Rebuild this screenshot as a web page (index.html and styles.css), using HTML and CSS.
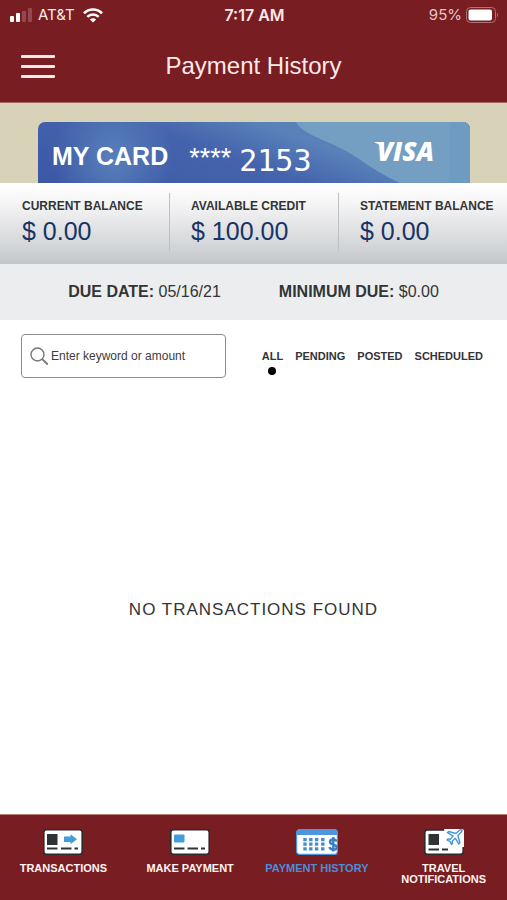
FILE: index.html
```html
<!DOCTYPE html>
<html lang="en">
<head>
<meta charset="utf-8">
<meta name="viewport" content="width=device-width, initial-scale=1">
<title>Payment History</title>
<link rel="stylesheet" href="styles.css">
</head>
<body>
<header class="top">
  <div class="status">
    <div class="status-side">
      <svg class="signal" width="24" height="14" viewBox="0 0 24 14" aria-hidden="true">
        <rect x="0" y="8" width="4" height="6" rx="1" fill="#fff"/>
        <rect x="6" y="5" width="4" height="9" rx="1" fill="#fff"/>
        <rect x="12" y="3" width="4" height="11" rx="1" fill="#934850"/>
        <rect x="18" y="0" width="4" height="14" rx="1" fill="#934850"/>
      </svg>
      <span class="carrier">AT&amp;T</span>
      <svg class="wifi" width="20" height="15" viewBox="0 0 20 15" aria-hidden="true">
        <g fill="none" stroke="#fff" stroke-width="2.6">
          <path d="M1 5.3C6 .2 14 .2 19 5.3"/>
          <path d="M4.3 8.9c3.2-3.2 8.2-3.2 11.4 0"/>
        </g>
        <path d="M10 14.6l-3.1-3.2c1.800-1.700 4.400-1.700 6.200 0z" fill="#fff"/>
      </svg>
    </div>
    <span class="time">7:17 AM</span>
    <div class="status-side status-end">
      <span>95%</span>
      <svg width="33" height="16" viewBox="0 0 33 16" aria-hidden="true">
        <rect x=".5" y=".5" width="29" height="15" rx="4" fill="none" stroke="#ad7479"/>
        <rect x="2.5" y="2.5" width="23.5" height="11" rx="2" fill="#fff"/>
        <path d="M31 5.5q2 2.500 0 5z" fill="#ad7479"/>
      </svg>
    </div>
  </div>
  <div class="title-bar">
    <button class="menu" type="button" aria-label="Menu"><span></span><span></span><span></span></button>
    <h1>Payment History</h1>
  </div>
</header>
<main>
  <section class="card-area">
    <div class="card">
      <svg class="card-art" viewBox="0 0 432 61" preserveAspectRatio="none" aria-hidden="true">
        <path d="M258 0h174v61h-70C334 48 322 36 306 28 288 18 264 12 258 0z" fill="#749fc2"/>
        <path d="M412 0h20v61h-20z" fill="#6e9bc2"/>
      </svg>
      <span class="card-name">MY CARD</span>
      <span class="card-mask">****</span>
      <span class="card-digits">2153</span>
      <span class="visa">VISA</span>
    </div>
  </section>
  <dl class="balances">
    <div><dt>CURRENT BALANCE</dt><dd>$ 0.00</dd></div>
    <div><dt>AVAILABLE CREDIT</dt><dd>$ 100.00</dd></div>
    <div><dt>STATEMENT BALANCE</dt><dd>$ 0.00</dd></div>
  </dl>
  <div class="due">
    <span><strong>DUE DATE:</strong> 05/16/21</span>
    <span><strong>MINIMUM DUE:</strong> $0.00</span>
  </div>
  <div class="filters">
    <label class="search">
      <svg width="19" height="19" viewBox="0 0 19 19" fill="none" stroke="#777" stroke-width="1.400" aria-hidden="true">
        <circle cx="7.500" cy="7.500" r="6.500"/><path d="M12.200 12.200l5.500 5.300" stroke-width="1.800"/>
      </svg>
      <input type="text" placeholder="Enter keyword or amount" aria-label="Enter keyword or amount">
    </label>
    <div class="tabs">
      <button type="button" class="active">ALL</button>
      <button type="button">PENDING</button>
      <button type="button">POSTED</button>
      <button type="button">SCHEDULED</button>
    </div>
  </div>
  <p class="empty">NO TRANSACTIONS FOUND</p>
</main>
<nav class="bottom">
  <a href="#transactions">
    <svg width="40" height="26" viewBox="0 0 40 26" aria-hidden="true">
      <rect x=".8" y=".8" width="38.400" height="24.400" rx="2.500" fill="#fff" stroke="#30292b" stroke-width="1.600"/>
      <path d="M4 5h10.500v11H4z" fill="#303335"/>
      <path d="M21 7.500h6.500V5.300l6.500 5-6.500 5v-2.300H21z" fill="#459cda"/>
      <path d="M4 19.500h10.500M18 19.500h10.500M31.500 19.500H35" stroke="#303335" stroke-width="2.200"/>
    </svg>
    <span>TRANSACTIONS</span>
  </a>
  <a href="#pay">
    <svg width="40" height="26" viewBox="0 0 40 26" aria-hidden="true">
      <rect x=".8" y=".8" width="38.400" height="24.400" rx="2.500" fill="#fff" stroke="#30292b" stroke-width="1.600"/>
      <rect x="4" y="5.500" width="10.500" height="8" rx="1" fill="#459cda"/>
      <path d="M4 19.500h10.500M17.500 19.500H28M31 19.500h4" stroke="#303335" stroke-width="2.200"/>
    </svg>
    <span>MAKE PAYMENT</span>
  </a>
  <a href="#history" class="current">
    <svg width="42" height="26" viewBox="0 0 42 26" aria-hidden="true">
      <rect x=".6" y=".6" width="40.800" height="24.800" rx="3" fill="#fff" stroke="#4b96df" stroke-width="1.200"/>
      <path d="M.6 6V3Q.6.600 3 .6h36q2.400 0 2.400 2.400v3z" fill="#4b96df"/>
      <g stroke="#438bd2" stroke-width="3.400" stroke-dasharray="3.200 1.400">
        <path d="M9 9v12.400M14.800 9v12.400M20.600 9v12.400M26.800 9v12.400"/>
      </g>
      <path d="M40.500 12.500c-.8-2.800-6.500-2.800-6.500.6 0 3.500 6.700 1.700 6.700 5.200 0 3.400-6.400 3.200-7.200-.2M37.300 8v14.500" fill="none" stroke="#347fc8" stroke-width="2.400"/>
    </svg>
    <span>PAYMENT HISTORY</span>
  </a>
  <a href="#travel">
    <svg width="40" height="26" viewBox="0 0 40 26" aria-hidden="true">
      <rect x=".8" y="1" width="38.400" height="24.200" rx="2.500" fill="#fff" stroke="#30292b" stroke-width="1.600"/>
      <path d="M20 0h18q2 0 2 2v16H25z" fill="#fff"/>
      <path d="M4.500 5H15v11H4.500z" fill="#303335"/>
      <path d="M4.500 20.500H15M18 20.500h6" stroke="#303335" stroke-width="2.200"/>
      <path d="M38 1.200c-1.300-.8-2.600-.2-3.700 1l-2.400 2.300-7.200-2-1.200 1.200 5.600 3.400-2.900 3.200-2.300-.4-1 1 3 1.500 1.600 3 1-1-.4-2.200 3.200-3 3.400 5.700 1.200-1.200-2-7.200 2.500-2.400c1.300-1.300 1.900-2.100 1.600-2.900z" fill="#fff" stroke="#4598dc" stroke-width="1.400" stroke-linejoin="round"/>
    </svg>
    <span>TRAVEL NOTIFICATIONS</span>
  </a>
</nav>
</body>
</html>
```

FILE: styles.css
```css
* { box-sizing: border-box; }
body {
  margin: 0;
  min-height: 100vh;
  display: flex;
  flex-direction: column;
  background: #fff;
  color: #333436;
  font-family: "Liberation Sans", Arial, sans-serif;
}
button { font: inherit; color: inherit; background: none; border: 0; padding: 0; }
svg { display: block; flex: none; }

.top { background: #781d22; color: #fbe9e8; border-bottom: 1px solid #a8655f; }
.status {
  display: grid;
  grid-template-columns: 1fr auto 1fr;
  align-items: center;
  height: 30px;
  padding: 0 8px 0 10px;
  font: 15px/20px Inter, sans-serif;
}
.status-side { display: flex; align-items: center; gap: 4px; }
.status-end { justify-content: flex-end; color: #e6c5c6; }
.wifi { margin-left: 4px; }
.time { font-size: 16px; font-weight: 600; }
.title-bar {
  display: grid;
  grid-template-columns: 34px 1fr 34px;
  align-items: center;
  height: 72px;
  padding: 0 21px;
}
.menu { display: grid; gap: 7px; }
.menu span { height: 3px; border-radius: 1px; background: #fbe9e8; }
h1 { margin: 0; font-size: 24px; line-height: 30px; font-weight: 400; text-align: center; }

.card-area { background: #d8d2b9; padding: 19px 37px 0 38px; }
.card {
  position: relative;
  display: flex;
  align-items: center;
  height: 61px;
  padding: 0 36px 0 14px;
  overflow: hidden;
  border-radius: 7px 7px 0 0;
  color: #fff;
  background:
    radial-gradient(ellipse 60px 70px at 75px 35px, #587fba 0, transparent 100%),
    linear-gradient(20deg, #3c58a5 0, #4564ad 45%, #5a82b9 65%, #5478b7 100%);
}
.card-art { position: absolute; inset: 0; width: 100%; height: 100%; }
.card span { position: relative; }
.card-name { font-size: 25px; line-height: 30px; font-weight: 700; margin-top: 7px; }
.card-mask { font-size: 27px; line-height: 30px; margin: 11px 0 0 21px; }
.card-digits { font-family: "DejaVu Sans Mono", monospace; font-size: 30px; line-height: 30px; margin: 16px 0 0 8px; }
.visa { margin-left: auto; margin-bottom: 3px; font: italic 800 26px/30px "Open Sans", sans-serif; }
.visa::before {
  content: "";
  position: absolute;
  left: -3px;
  top: 6px;
  width: 10px;
  height: 5px;
  background: #fff;
  clip-path: polygon(0 0, 100% 0, 100% 100%);
}

.balances {
  display: grid;
  grid-template-columns: repeat(3, 1fr);
  margin: 0;
  padding: 10px 0 13px;
  background: linear-gradient(#fff 0, #f5f5f6 25%, #dfe0e2 60%, #c3c7ca 100%);
}
.balances div { height: 58px; padding: 5px 0 0 22px; }
.balances div + div { border-left: 1px solid #bfc0c2; padding-left: 21px; }
dt { font-size: 12px; line-height: 16px; font-weight: 700; white-space: nowrap; }
dd { margin: 3px 0 0; font-size: 25px; line-height: 28px; color: #173466; }

.due {
  display: flex;
  justify-content: center;
  gap: 58px;
  padding: 18px 0;
  background: #ecedef;
  font-size: 16px;
  line-height: 20px;
}

.filters { display: flex; justify-content: space-between; padding: 14px 24px 0 21px; }
.search {
  display: flex;
  align-items: center;
  gap: 2px;
  flex: 0 1 205px;
  height: 44px;
  padding: 0 8px;
  border: 1px solid #8c8c8c;
  border-radius: 4px;
}
.search input {
  flex: 1;
  min-width: 0;
  padding: 0;
  border: 0;
  outline: 0;
  background: none;
  font: 12px/16px "Liberation Sans", Arial, sans-serif;
}
.search input::placeholder { color: #3c3c3c; opacity: 1; }
.tabs { display: flex; align-items: center; gap: 12px; font-size: 11px; line-height: 16px; font-weight: 700; }
.tabs button { position: relative; }
.tabs .active::after {
  content: "";
  position: absolute;
  left: 50%;
  top: 19px;
  width: 8px;
  height: 8px;
  margin-left: -4px;
  border-radius: 50%;
  background: #000;
}

main { flex: 1; display: flex; flex-direction: column; }
.empty {
  flex: 1;
  display: flex;
  align-items: center;
  justify-content: center;
  margin: 0;
  padding-top: 28px;
  font-size: 17px;
  line-height: 20px;
  letter-spacing: 1px;
}

.bottom {
  display: grid;
  grid-template-columns: repeat(4, 1fr);
  min-height: 86px;
  padding-top: 14px;
  background: #781d22;
  border-top: 1px solid #b8837a;
}
.bottom a {
  display: flex;
  flex-direction: column;
  align-items: center;
  gap: 8px;
  color: #fff3f1;
  text-align: center;
  text-decoration: none;
  font-size: 11px;
  line-height: 11px;
  font-weight: 700;
}
.bottom .current { color: #4b8ed8; }
```
